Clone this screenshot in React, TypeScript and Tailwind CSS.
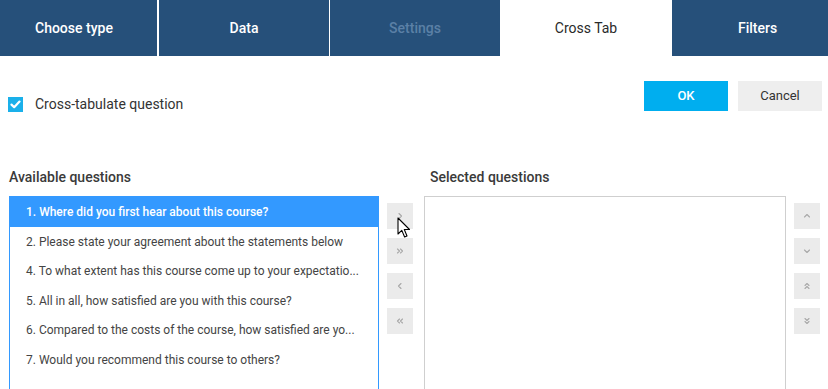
import React from "react";

const questions = [
  "1. Where did you first hear about this course?",
  "2. Please state your agreement about the statements below",
  "4. To what extent has this course come up to your expectatio...",
  "5. All in all, how satisfied are you with this course?",
  "6. Compared to the costs of the course, how satisfied are yo...",
  "7. Would you recommend this course to others?",
];

function Chev({ d }: { d: string }) {
  return (
    <svg width="10" height="10" viewBox="0 0 10 10" fill="none" stroke="#a8a8a8" strokeWidth="1.1" strokeLinecap="round" strokeLinejoin="round">
      <path d={d} />
    </svg>
  );
}

function SmallBtn({ d }: { d: string }) {
  return (
    <div className="w-[26px] h-[26px] bg-[#ebebeb] flex items-center justify-center">
      <Chev d={d} />
    </div>
  );
}

export default function App() {
  return (
    <div className="w-[828px] h-[389px] bg-white overflow-hidden relative" style={{ fontFamily: "Roboto, 'Liberation Sans', sans-serif" }}>
      {/* Tabs */}
      <div className="flex h-[56px] bg-white">
        <div className="w-[157px] mr-[2px] bg-[#26507a] text-white text-[14px] font-medium flex items-center pl-[35px]">Choose type</div>
        <div className="w-[170px] mr-[1px] bg-[#26507a] text-white text-[14px] font-medium flex items-center justify-center">Data</div>
        <div className="w-[170px] bg-[#26507a] text-[#5b80a6] text-[14px] font-medium flex items-center justify-center">Settings</div>
        <div className="w-[172px] bg-white text-[#2a2a2a] text-[14px] flex items-center justify-center">Cross Tab</div>
        <div className="flex-1 bg-[#26507a] text-white text-[14px] font-medium flex items-center pl-[66px]">Filters</div>
      </div>

      {/* Checkbox row + buttons */}
      <div className="flex items-start justify-between pl-[8px] pr-[6px] pt-[25px]">
        <div className="flex items-center mt-[13px]">
          <div className="w-[15px] h-[15px] bg-[#1ab0ea] flex items-center justify-center">
            <svg width="11" height="9" viewBox="0 0 11 9" fill="none" stroke="white" strokeWidth="2.2" strokeLinecap="round" strokeLinejoin="round">
              <path d="M1.5 4.6 L4.2 7.2 L9.5 1.6" />
            </svg>
          </div>
          <span className="ml-[12px] text-[14px] text-[#333]">Cross-tabulate question</span>
        </div>
        <div className="flex gap-[10px]">
          <div className="w-[84px] h-[30px] bg-[#00aeef] text-white text-[13px] font-medium flex items-center justify-center">OK</div>
          <div className="w-[84px] h-[30px] bg-[#eeeeee] text-[#333] text-[13px] flex items-center justify-center">Cancel</div>
        </div>
      </div>

      {/* Lists */}
      <div className="flex pl-[9px] mt-[52px]">
        <div className="w-[370px] flex flex-col">
          <div className="text-[14px] font-medium text-[#3a3a3a] h-[20px] leading-[20px]">Available questions</div>
          <div className="mt-[9px] h-[220px] border border-[#3399ff] flex flex-col">
            {questions.map((q, i) => (
              <div
                key={i}
                className={
                  i === 0
                    ? "h-[30px] bg-[#3399ff] text-white text-[12px] font-medium flex items-center pl-[16px] whitespace-nowrap"
                    : "h-[29.5px] text-[#444] text-[12px] flex items-center pl-[16px] whitespace-nowrap"
                }
              >
                {q}
              </div>
            ))}
          </div>
        </div>

        <div className="flex flex-col gap-[9px] ml-[8px] mt-[36px]">
          <SmallBtn d="M4 2.5 L6.5 5 L4 7.5" />
          <SmallBtn d="M2.5 3 L4.5 5 L2.5 7 M5.5 3 L7.5 5 L5.5 7" />
          <SmallBtn d="M6 2.5 L3.5 5 L6 7.5" />
          <SmallBtn d="M4.5 3 L2.5 5 L4.5 7 M7.5 3 L5.5 5 L7.5 7" />
        </div>

        <div className="flex flex-col ml-[11px]">
          <div className="text-[14px] font-medium text-[#3a3a3a] h-[20px] leading-[20px] pl-[6px]">Selected questions</div>
          <div className="mt-[9px] w-[362px] h-[220px] border border-[#cfcfcf]" />
        </div>

        <div className="flex flex-col gap-[9px] ml-[8px] mt-[36px]">
          <SmallBtn d="M2.5 6 L5 3.5 L7.5 6" />
          <SmallBtn d="M2.5 4 L5 6.5 L7.5 4" />
          <SmallBtn d="M3 4.5 L5 2.5 L7 4.5 M3 7.5 L5 5.5 L7 7.5" />
          <SmallBtn d="M3 2.5 L5 4.5 L7 2.5 M3 5.5 L5 7.5 L7 5.5" />
        </div>
      </div>

      {/* Mouse cursor */}
      <svg className="absolute left-[397px] top-[217px]" width="14" height="22" viewBox="0 0 14 22">
        <path d="M1 1 L1 17 L4.8 13.4 L7.6 20 L10 19 L7.3 12.5 L12.5 12.5 Z" fill="white" stroke="black" strokeWidth="1.1" strokeLinejoin="round" />
      </svg>
    </div>
  );
}
